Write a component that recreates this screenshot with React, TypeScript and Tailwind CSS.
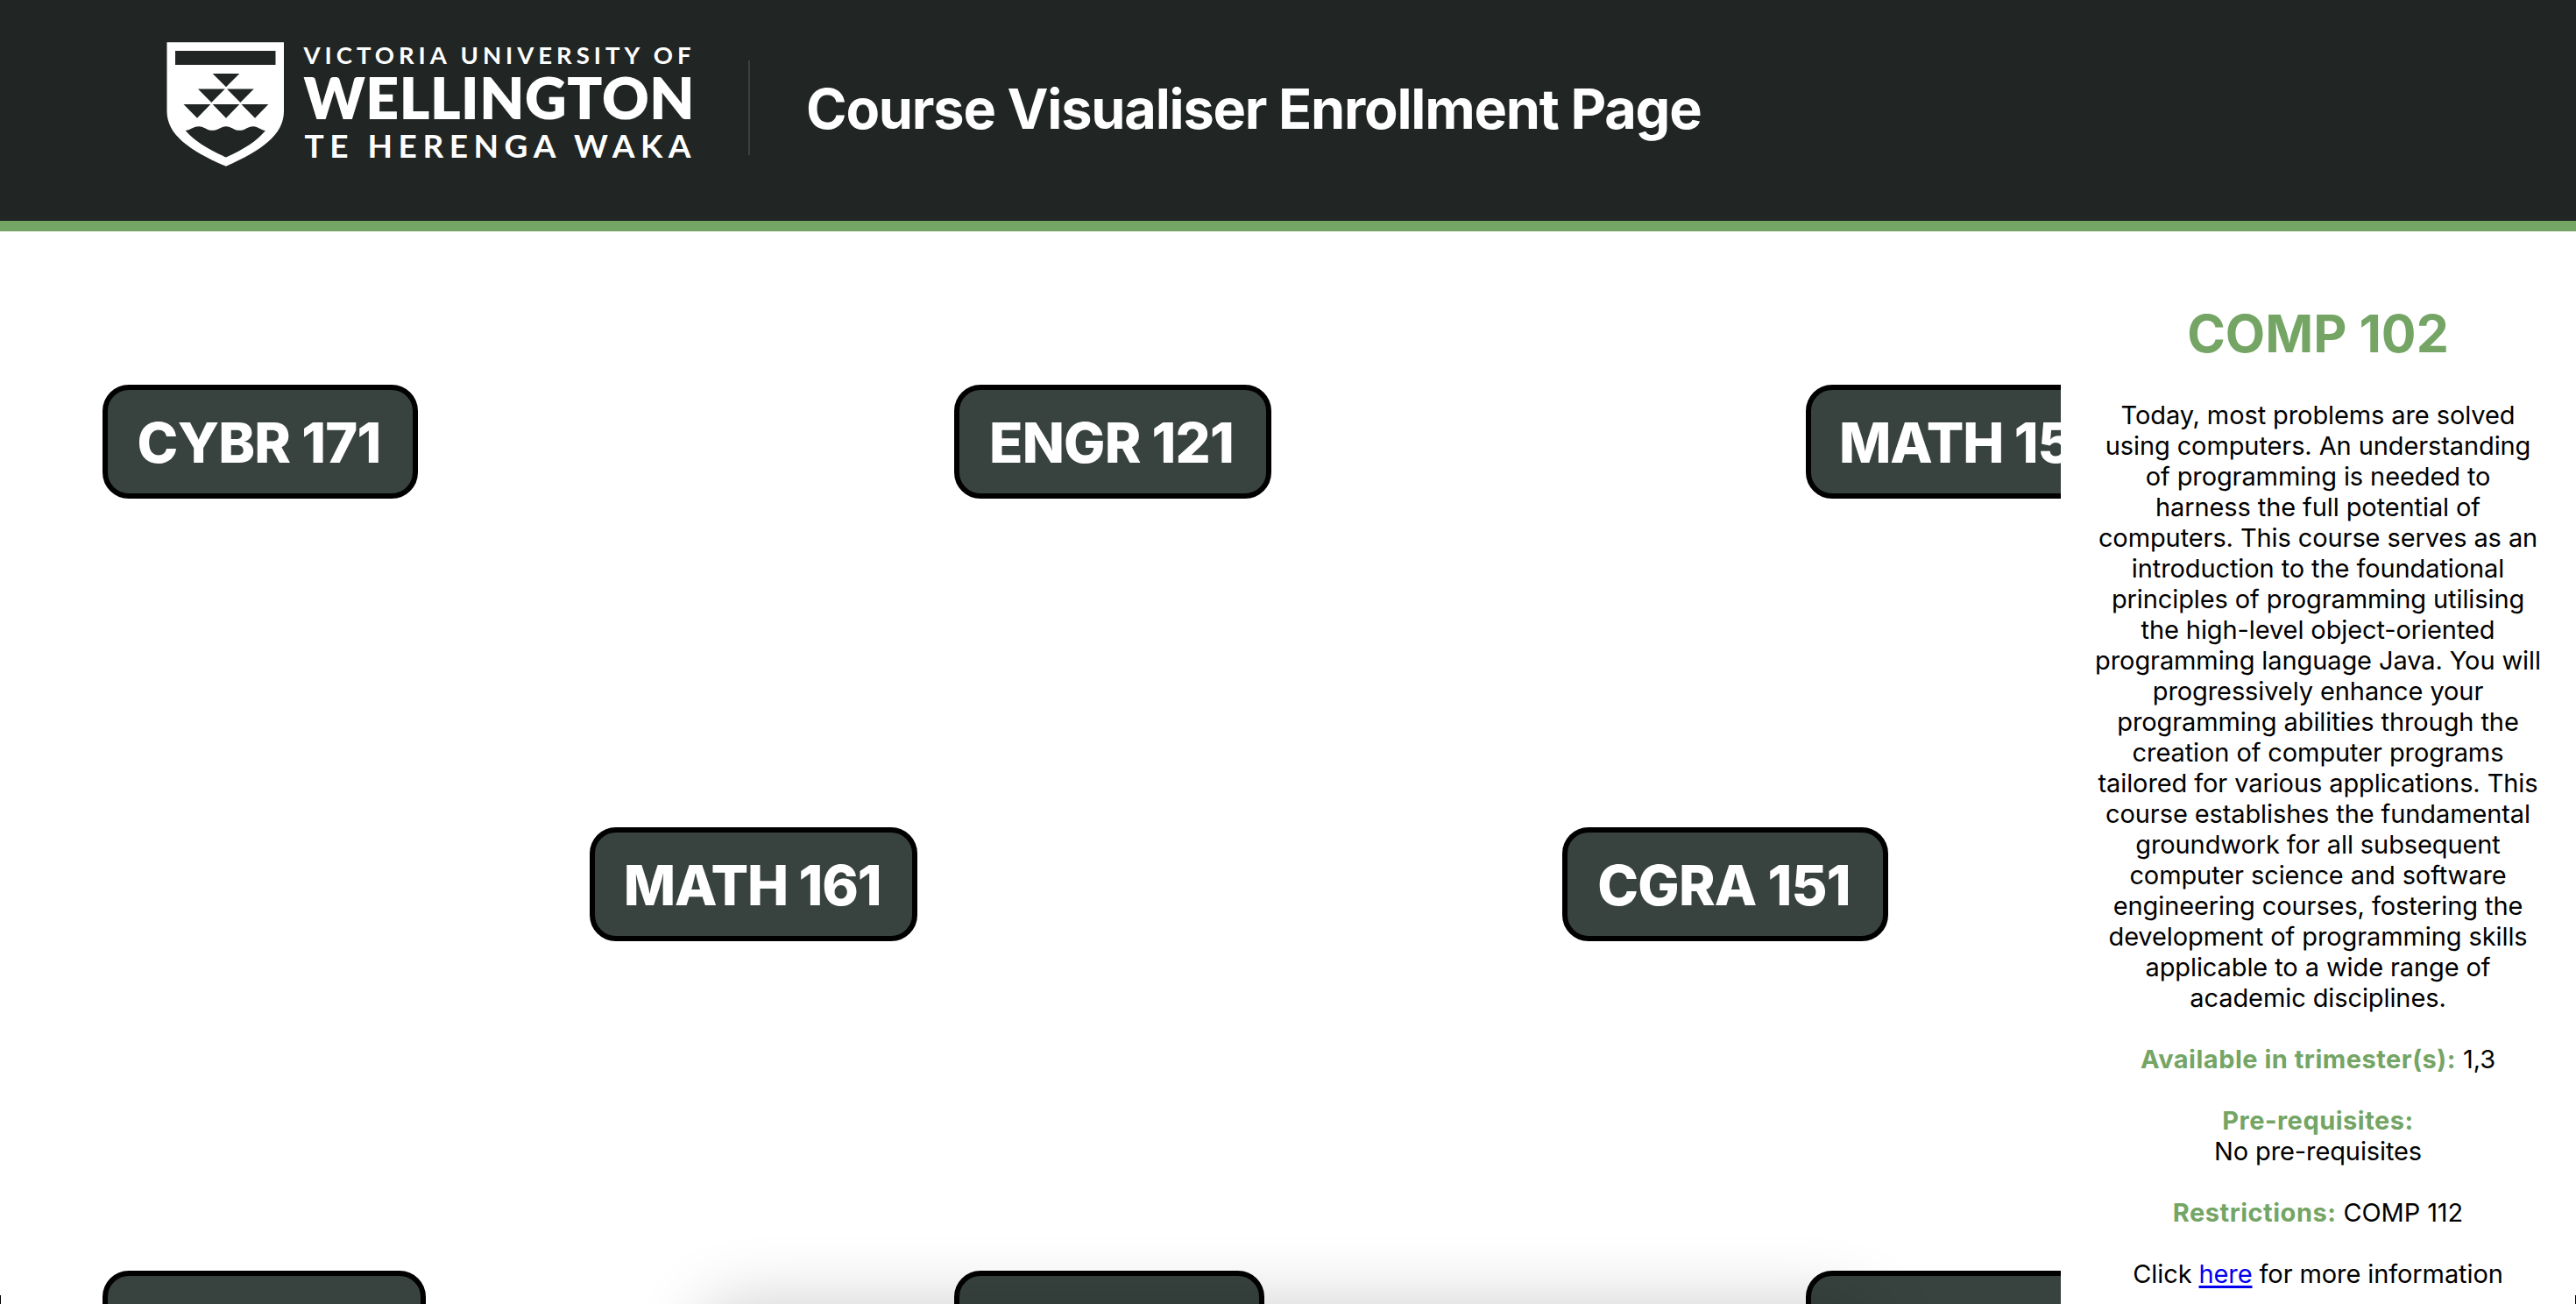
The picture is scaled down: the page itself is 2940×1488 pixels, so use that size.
type Course = { code: string; box: string };

const courses: Course[] = [
  { code: 'CYBR 171', box: 'left-[117px] top-[175px] w-[360px] tracking-[-0.8px]' },
  { code: 'ENGR 121', box: 'left-[1089px] top-[175px] w-[362px] tracking-[-0.8px]' },
  { code: 'MATH 151', box: 'left-[2061px] top-[175px] w-[372px] tracking-[-1.2px]' },
  { code: 'MATH 161', box: 'left-[673px] top-[680px] w-[374px] tracking-[-1.2px]' },
  { code: 'CGRA 151', box: 'left-[1783px] top-[680px] w-[372px] tracking-[-0.8px]' },
  { code: '', box: 'left-[117px] top-[1186px] w-[369px]' },
  { code: '', box: 'left-[1089px] top-[1186px] w-[354px]' },
  { code: '', box: 'left-[2061px] top-[1186px] w-[370px]' },
];

const description = [
  'Today, most problems are solved',
  'using computers. An understanding',
  'of programming is needed to',
  'harness the full potential of',
  'computers. This course serves as an',
  'introduction to the foundational',
  'principles of programming utilising',
  'the high-level object-oriented',
  'programming language Java. You will',
  'progressively enhance your',
  'programming abilities through the',
  'creation of computer programs',
  'tailored for various applications. This',
  'course establishes the fundamental',
  'groundwork for all subsequent',
  'computer science and software',
  'engineering courses, fostering the',
  'development of programming skills',
  'applicable to a wide range of',
  'academic disciplines.',
];

function Logo() {
  return (
    <svg
      viewBox="190 48 620 143"
      className="h-[143px] w-[620px] shrink-0"
      fill="#fff"
      fontFamily="Lato, sans-serif"
      aria-label="Victoria University of Wellington"
    >
      <path
        fillRule="evenodd"
        d="M190.5 48.3H324V127C324 154 298 172 257.8 189.8C217 172 190.5 154 190.5 127Z
           M200 58V74H314.5V58Z
           M242.7 84H273.3L258 99.3Z
           M226 101.5H256.7L241.3 117Z M259 101.5H289.7L274.3 117Z
           M209.5 119H240.3L225 134.8Z M242.7 119H273.3L258 134.8Z M275.5 119H306.3L291 134.8Z
           M211.7 149C218 148 221 144.2 227 144.2C233 144.2 236 148.8 242.5 148.8C249 148.8 252 144.2 258 144.2C264 144.2 267 148.8 273.3 148.8C280 148.8 282.5 144.2 289 144.2C295 144.2 297 148.5 303 149C293 161 279 170 258 179.5C237 170 222 161 211.7 149Z"
      />
      <text x="346.5" y="72.7" fontSize="27.5" fontWeight="700" textLength="442" lengthAdjust="spacing">VICTORIA UNIVERSITY OF</text>
      <text x="346.5" y="136.2" fontSize="66" fontWeight="800" textLength="446" lengthAdjust="spacing">WELLINGTON</text>
      <text x="347.5" y="180" fontSize="37" fontWeight="700" textLength="441" lengthAdjust="spacing">TE HERENGA WAKA</text>
    </svg>
  );
}

function Header() {
  return (
    <header className="flex h-[264px] shrink-0 border-b-[12px] border-[#74a564] bg-[#212624] pl-[190px] text-white">
      <div className="pt-[48px]">
        <Logo />
      </div>
      <div className="mt-[69px] ml-[44px] h-[108px] w-[2px] bg-[#3d4240]" />
      <h1 className="ml-[64px] pt-[92px] text-[63px] leading-[64px] font-bold tracking-[-1.2px] whitespace-nowrap">
        Course Visualiser Enrollment Page
      </h1>
    </header>
  );
}

function CourseNode({ code, box }: Course) {
  return (
    <div
      className={`absolute flex h-[130px] items-center justify-center rounded-[30px] border-[6px] border-black bg-[#38433f] pt-[2px] pr-[3px] text-[63px] leading-none font-extrabold whitespace-nowrap text-white ${box}`}
    >
      {code}
    </div>
  );
}

function Label({ children }: { children: string }) {
  return <b className="font-bold tracking-[0.5px] text-[#74a564]">{children}</b>;
}

function Details() {
  return (
    <aside className="w-[588px] shrink-0 bg-white pt-[87px] pr-px text-center text-[29px] leading-[35px] tracking-[-0.1px] whitespace-nowrap text-black">
      <h2 className="mb-[45px] text-[59px] leading-[60px] font-bold tracking-normal text-[#74a564]">COMP 102</h2>
      {description.map((line) => (
        <p key={line}>{line}</p>
      ))}
      <p className="mt-[35px]">
        <Label>Available in trimester(s):</Label> 1,3
      </p>
      <p className="mt-[35px]">
        <Label>Pre-requisites:</Label>
      </p>
      <p>No pre-requisites</p>
      <p className="mt-[35px]">
        <Label>Restrictions:</Label> COMP 112
      </p>
      <p className="mt-[35px]">
        Click{' '}
        <a href="#" className="text-[#0000ee] underline decoration-[3px] underline-offset-[3px]">
          here
        </a>{' '}
        for more information
      </p>
    </aside>
  );
}

export default function App() {
  return (
    <div className="relative flex h-[1488px] w-[2940px] flex-col overflow-hidden bg-white font-['Inter',sans-serif]">
      <Header />
      <div className="flex min-h-0 flex-1">
        <main className="relative flex-1 overflow-hidden">
          {courses.map((c) => (
            <CourseNode key={c.box} {...c} />
          ))}
        </main>
        <Details />
      </div>
      <div className="absolute top-full left-[800px] h-[200px] w-[1340px] rounded-[40px] shadow-[0_0_80px_rgba(0,0,0,0.2)]" />
      <div className="absolute bottom-0 left-0 h-[10px] w-px bg-black" />
      <div className="absolute right-0 bottom-0 h-[10px] w-px bg-black" />
    </div>
  );
}
